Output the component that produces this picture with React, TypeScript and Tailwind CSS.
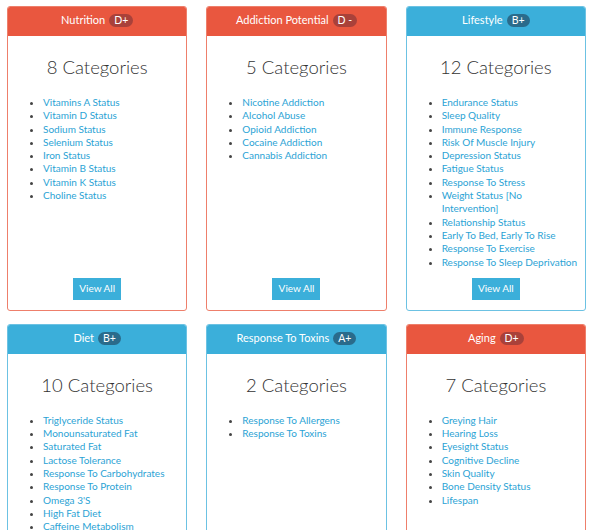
import React from 'react';

interface Panel {
  title: string;
  grade: string;
  tone: 'red' | 'blue';
  items: string[];
}

const panels: Panel[] = [
  {
    title: 'Nutrition',
    grade: 'D+',
    tone: 'red',
    items: [
      'Vitamins A Status',
      'Vitamin D Status',
      'Sodium Status',
      'Selenium Status',
      'Iron Status',
      'Vitamin B Status',
      'Vitamin K Status',
      'Choline Status',
    ],
  },
  {
    title: 'Addiction Potential',
    grade: 'D -',
    tone: 'red',
    items: ['Nicotine Addiction', 'Alcohol Abuse', 'Opioid Addiction', 'Cocaine Addiction', 'Cannabis Addiction'],
  },
  {
    title: 'Lifestyle',
    grade: 'B+',
    tone: 'blue',
    items: [
      'Endurance Status',
      'Sleep Quality',
      'Immune Response',
      'Risk Of Muscle Injury',
      'Depression Status',
      'Fatigue Status',
      'Response To Stress',
      'Weight Status [No Intervention]',
      'Relationship Status',
      'Early To Bed, Early To Rise',
      'Response To Exercise',
      'Response To Sleep Deprivation',
    ],
  },
  {
    title: 'Diet',
    grade: 'B+',
    tone: 'blue',
    items: [
      'Triglyceride Status',
      'Monounsaturated Fat',
      'Saturated Fat',
      'Lactose Tolerance',
      'Response To Carbohydrates',
      'Response To Protein',
      "Omega 3'S",
      'High Fat Diet',
      'Caffeine Metabolism',
      'Salt Sensitivity',
    ],
  },
  {
    title: 'Response To Toxins',
    grade: 'A+',
    tone: 'blue',
    items: ['Response To Allergens', 'Response To Toxins'],
  },
  {
    title: 'Aging',
    grade: 'D+',
    tone: 'red',
    items: [
      'Greying Hair',
      'Hearing Loss',
      'Eyesight Status',
      'Cognitive Decline',
      'Skin Quality',
      'Bone Density Status',
      'Lifespan',
    ],
  },
];

const PanelCard: React.FC<{ panel: Panel }> = ({ panel }) => {
  const red = panel.tone === 'red';
  return (
    <div
      className={`flex flex-col rounded-[3px] border bg-white ${
        red ? 'border-[#ee7f6b]' : 'border-[#6cc2e3]'
      }`}
    >
      <div
        className={`flex h-[29px] items-center justify-center gap-[4px] rounded-t-[2px] pb-[2px] text-[11px] text-white ${
          red ? 'bg-[#e9573f]' : 'bg-[#3bafda]'
        }`}
      >
        <span>{panel.title}</span>
        <span
          className={`rounded-full px-[5px] text-[10.5px] leading-[13px] ${
            red ? 'bg-[#a9413a]' : 'bg-[#2a6b8b]'
          }`}
        >
          {panel.grade}
        </span>
      </div>
      <h3 className="pt-[19px] text-center text-[18.5px] font-light leading-[24px] text-[#333]">
        {panel.items.length} Categories
      </h3>
      <ul className="list-disc pt-[17px] pl-[35px] pr-[5px] text-[10px] leading-[13.3px] text-[#444]">
        {panel.items.map(item => (
          <li key={item}>
            <span className="text-[#2ba3d5]">{item}</span>
          </li>
        ))}
      </ul>
      <div className="mt-auto flex justify-center pt-[9px] pb-[10px]">
        <button className="h-[22px] w-[48px] bg-[#3bafda] text-[10px] text-white">View All</button>
      </div>
    </div>
  );
};

export default function App() {
  return (
    <div className="min-h-screen bg-white px-[7px] pt-[6px] pb-[20px]" style={{ fontFamily: 'Lato, "Open Sans", sans-serif' }}>
      <div className="grid grid-cols-3 gap-x-[19px] gap-y-[13px]">
        {panels.map(panel => (
          <PanelCard key={panel.title} panel={panel} />
        ))}
      </div>
    </div>
  );
}
